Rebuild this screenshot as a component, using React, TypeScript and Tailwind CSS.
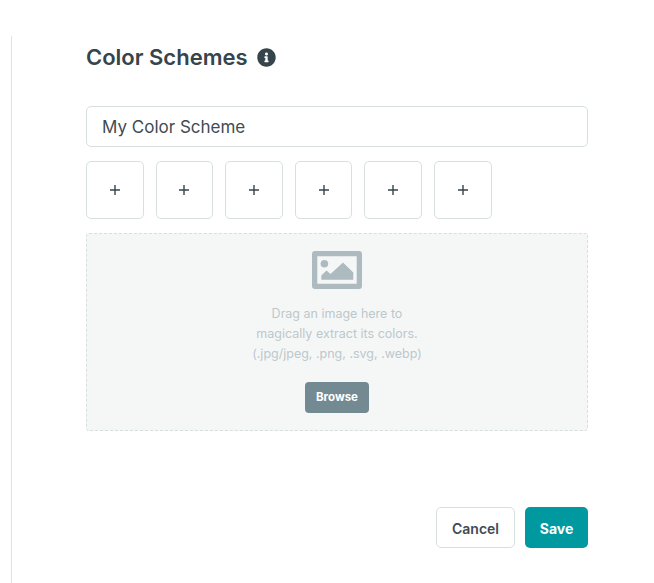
import { FaInfoCircle } from 'react-icons/fa';

const swatches = [0, 1, 2, 3, 4, 5];

function PlusIcon() {
  return (
    <svg width="10" height="10" viewBox="0 0 10 10" fill="none" stroke="#36444b" strokeWidth="1.4">
      <path d="M5 0v10M0 5h10" />
    </svg>
  );
}

function ImageIcon() {
  return (
    <svg width="50" height="38" viewBox="0 0 50 38" fill="#adbbc0">
      <path
        fillRule="evenodd"
        d="M3 0h44a3 3 0 0 1 3 3v32a3 3 0 0 1-3 3H3a3 3 0 0 1-3-3V3a3 3 0 0 1 3-3zM5.3 5.3v27.4h39.4V5.3z"
      />
      <circle cx="12.4" cy="12.7" r="3.8" />
      <path d="M9.3 28.7v-4.2l5.2-5 4 3.5L31 11.5l10.3 10v7.2z" />
    </svg>
  );
}

export default function App() {
  return (
    <div className="h-[583px] w-[654px] bg-white font-['Inter',sans-serif] pl-[11px] pt-[36px] overflow-hidden">
      <div className="h-full border-l border-[#dde3e5] pl-[74px] w-[577px]">
        {/* Header */}
        <div className="flex items-center gap-[9px] h-[42px]">
          <h1 className="text-[22px] font-semibold text-[#36444b] leading-none">Color Schemes</h1>
          <FaInfoCircle size={19} className="text-[#36444b]" />
        </div>

        <input
          defaultValue="My Color Scheme"
          className="mt-[28px] block w-full h-[41px] rounded-[5px] border border-[#d8dfe1] px-[15px] text-[17px] text-[#3f4c53] outline-none"
        />

        <div className="mt-[14px] flex gap-[12px]">
          {swatches.map((s) => (
            <button
              key={s}
              className="w-[57.6px] h-[58px] rounded-[5px] border border-[#d8dfe1] flex items-center justify-center"
            >
              <PlusIcon />
            </button>
          ))}
        </div>

        {/* Drop zone */}
        <div className="mt-[14px] h-[198px] rounded-[3px] border border-dashed border-[#d8dfe1] bg-[#f5f7f7] flex flex-col items-center pt-[17px]">
          <ImageIcon />
          <p className="mt-[15px] text-center text-[12.5px] leading-[20px] text-[#bcc8cc]">
            Drag an image here to
            <br />
            magically extract its colors.
            <br />
            (.jpg/jpeg, .png, .svg, .webp)
          </p>
          <button className="mt-[18px] w-[64px] h-[31px] rounded-[4px] bg-[#748a92] text-white text-[11.5px] font-bold">
            Browse
          </button>
        </div>

        {/* Footer */}
        <div className="mt-[76px] flex justify-end gap-[10px]">
          <button className="w-[79px] h-[41px] rounded-[5px] border border-[#d8dfe1] bg-white text-[14px] font-semibold text-[#3f4c53] pt-[1px]">
            Cancel
          </button>
          <button className="w-[63px] h-[41px] rounded-[5px] bg-[#0099a0] text-[14px] font-bold text-white pt-[1px]">
            Save
          </button>
        </div>
      </div>
    </div>
  );
}
